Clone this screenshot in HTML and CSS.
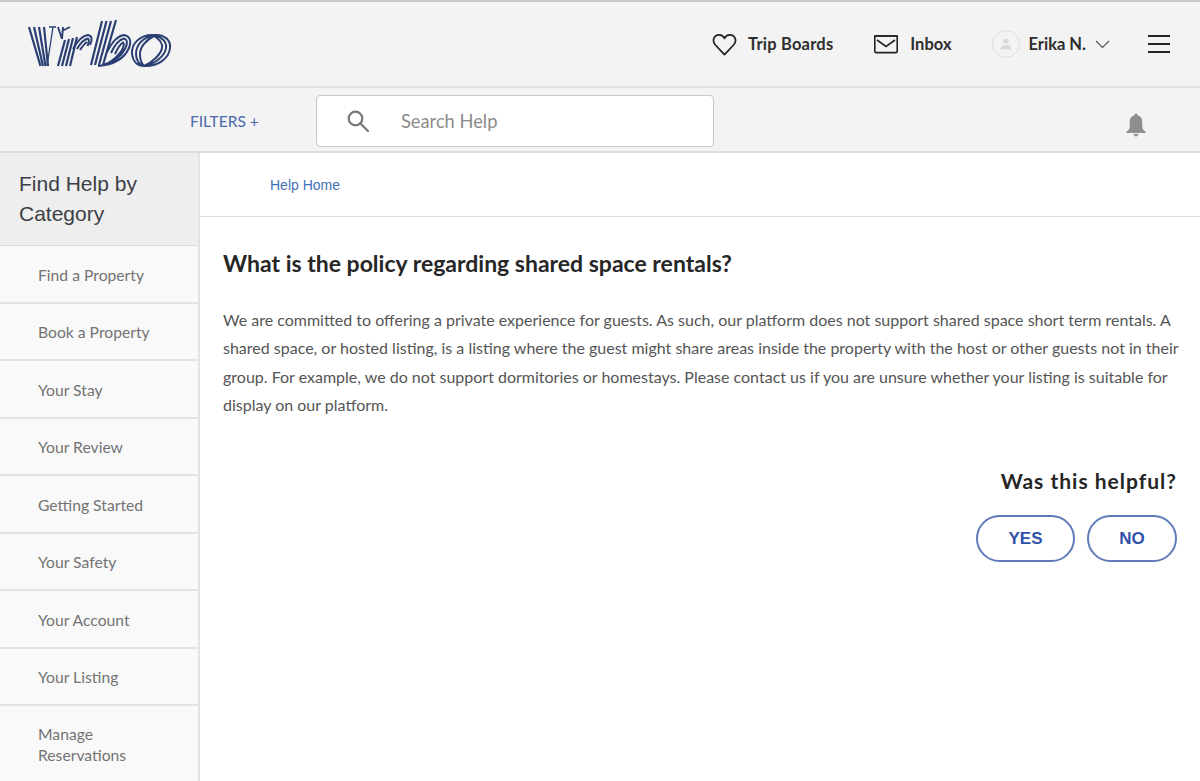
FILE: index.html
```html
<!DOCTYPE html>
<html lang="en">
<head>
    <meta charset="UTF-8">
    <title>Vrbo Help</title>
    <link rel="stylesheet" href="styles.css">
</head>
<body>
    <div class="top-strip"></div>

    <!-- Main header -->
    <header class="site-header">
        <a class="logo" href="#" aria-label="Vrbo">
            <svg width="144" height="50" viewBox="0 0 144 50" fill="none" stroke="#2b3f73" stroke-width="2.200">
                <!-- V -->
                <path d="M1 9 L12.500 48 M6 9 L15 48 M11 9 L17.500 48 M16 9 L20 48"/>
                <path d="M19 48 L25 9 M21 9 H28" stroke-width="1.300"/>
                <!-- r -->
                <path d="M30 9 L34 21 M35 9 L34 21 M34 13 L42 9" stroke-width="1.900"/>
                <path d="M30 48 L37 22 M34 48 L41 21 M38 48 L45 20 M42 48 L49 19"/>
                <path d="M45 31 Q52 18 60 17 Q66 18 62 27 M49 31 Q54 22 60 20.500 Q62 22 59.500 28 M52 32 Q56 26 59 24" stroke-width="2"/>
                <!-- b -->
                <path d="M63 47 L74 3 M67 47 L78.500 3 M71 47 L83 3 M75 47 L88 2"/>
                <path d="M79 34 Q87 18 96 17 Q105 19 101 30 Q94 46 70 48 M83 35 Q89 22 96 20.500 Q101 22 97.500 30 Q91 43 75 47 M87 36 Q91 27 95 24.500 Q97 26 94 32 Q89 40 80 45" stroke-width="2"/>
                <!-- o -->
                <path d="M126 17 C112 16 103 26 104 36 C105 44 110 48 116 48 M126 17.500 C115 19 108 27 108 36 C108 43 112 47 116 48 M126 18 C118 22 112 29 112 36 C112 42 114 46 116 48" stroke-width="2"/>
                <path d="M126 17 C136 16 143 22 142 30 C141 40 130 49 116 48 M126 17.500 C134 19 139 24 138 30 C137 38 127 46 116 48 M126 18 C131 21 135 25 134 30 C133 36 125 44 116 48" stroke-width="2"/>
            </svg>
        </a>
        <nav class="user-nav">
            <a class="nav-link" href="#">
                <svg width="25" height="23" viewBox="0 0 26 24" fill="none" stroke="#222" stroke-width="1.800" stroke-linejoin="round">
                    <path d="M13 22.500 L3.500 12.500 C-0.500 8 2 2 7.500 2 C10 2 12 3.500 13 5.500 C14 3.500 16 2 18.500 2 C24 2 26.500 8 22.500 12.500 Z"/>
                </svg>
                Trip Boards
            </a>
            <a class="nav-link inbox" href="#">
                <svg width="24" height="19" viewBox="0 0 24 19" fill="none" stroke="#222" stroke-width="1.600">
                    <path d="M0 1 H24"/>
                    <rect x="0.800" y="1" width="22.400" height="16.600" rx="1"/>
                    <path d="M3 5 L12 11.500 L21 5"/>
                </svg>
                Inbox
            </a>
            <a class="nav-link user" href="#">
                <span class="avatar">
                    <svg width="12" height="12" viewBox="0 0 12 12" fill="#d9d9d9">
                        <circle cx="6" cy="3.200" r="2.600"/>
                        <path d="M0.500 11.500 C0.500 8 3 7 6 7 C9 7 11.500 8 11.500 11.500 Z"/>
                    </svg>
                </span>
                Erika N.
                <svg width="15" height="9" viewBox="0 0 15 9" fill="none" stroke="#555" stroke-width="1.200">
                    <path d="M1 1 L7.500 7.500 L14 1"/>
                </svg>
            </a>
            <button class="menu-btn" aria-label="Menu"><span></span><span></span><span></span></button>
        </nav>
    </header>

    <!-- Search bar -->
    <div class="search-bar">
        <a class="filters" href="#">FILTERS +</a>
        <div class="search-box">
            <svg width="22" height="22" viewBox="0 0 22 22" fill="none" stroke="#777" stroke-width="2.200">
                <circle cx="8.500" cy="8.500" r="6.800"/>
                <path d="M13.500 13.500 L21 21" stroke-linecap="round"/>
            </svg>
            <span class="search-text">Search Help</span>
        </div>
        <svg class="bell" width="20" height="24" viewBox="0 0 20 24" fill="#8e8e8e">
            <path d="M10 0.500 C11 0.500 11.500 1.200 11.500 2.300 C15 3.300 16.300 6 16.300 9.500 V14 C16.300 16 17.800 17.500 19.500 18.800 V20 H0.500 V18.800 C2.200 17.500 3.700 16 3.700 14 V9.500 C3.700 6 5 3.300 8.500 2.300 C8.500 1.200 9 0.500 10 0.500 Z"/>
            <path d="M7.500 21 H12.500 C12.300 22.600 11.300 23.500 10 23.500 C8.700 23.500 7.700 22.600 7.500 21 Z"/>
        </svg>
    </div>

    <div class="layout">
        <!-- Sidebar categories -->
        <aside class="sidebar">
            <h2 class="sidebar-title">Find Help by Category</h2>
            <a class="cat" href="#">Find a Property</a>
            <a class="cat" href="#">Book a Property</a>
            <a class="cat" href="#">Your Stay</a>
            <a class="cat" href="#">Your Review</a>
            <a class="cat" href="#">Getting Started</a>
            <a class="cat" href="#">Your Safety</a>
            <a class="cat" href="#">Your Account</a>
            <a class="cat" href="#">Your Listing</a>
            <a class="cat cat-tall" href="#">Manage<br>Reservations</a>
        </aside>

        <main class="content">
            <div class="crumbs"><a href="#">Help Home</a></div>
            <article class="article">
                <h1>What is the policy regarding shared space rentals?</h1>
                <p>We are committed to offering a private experience for guests. As such, our platform does not support shared space short term rentals. A shared space, or hosted listing, is a listing where the guest might share areas inside the property with the host or other guests not in their group. For example, we do not support dormitories or homestays. Please contact us if you are unsure whether your listing is suitable for display on our platform.</p>
                <div class="feedback">
                    <div class="feedback-title">Was this helpful?</div>
                    <div class="feedback-btns">
                        <button class="pill pill-yes">YES</button>
                        <button class="pill pill-no">NO</button>
                    </div>
                </div>
            </article>
        </main>
    </div>
</body>
</html>
```

FILE: styles.css
```css
/* Page */
html, body {
    height: 781px;
    overflow: hidden;
}

body {
    margin: 0;
    font-family: Lato, "Open Sans", sans-serif;
    color: #222;
    background: #fff;
}

a {
    text-decoration: none;
}

.top-strip {
    height: 2px;
    background: #c9c9c9;
}

/* Header */
.site-header {
    height: 86px;
    box-sizing: border-box;
    display: flex;
    align-items: center;
    justify-content: space-between;
    padding: 0 30px 0 28px;
    background: #f3f3f3;
    border-bottom: 2px solid #e2e2e2;
}

.logo {
    display: flex;
    margin-bottom: 2px;
}

.user-nav {
    display: flex;
    align-items: center;
}

.nav-link {
    display: flex;
    align-items: center;
    gap: 11px;
    margin-right: 41px;
    font-size: 16.500px;
    font-weight: 700;
    letter-spacing: 0.200px;
    color: #2e2e2e;
}

.nav-link.inbox {
    gap: 12px;
    margin-right: 40px;
    letter-spacing: 0;
}

.nav-link.user {
    margin-right: 38px;
    gap: 9px;
    letter-spacing: 0;
}

.avatar {
    display: flex;
    align-items: center;
    justify-content: center;
    width: 26px;
    height: 26px;
    border: 1px solid #ddd;
    border-radius: 50%;
}

.menu-btn {
    display: flex;
    flex-direction: column;
    gap: 6px;
    padding: 0;
    border: none;
    background: none;
}

.menu-btn span {
    display: block;
    width: 22px;
    height: 2px;
    background: #222;
}

/* Search bar */
.search-bar {
    height: 65px;
    box-sizing: border-box;
    display: flex;
    align-items: center;
    padding: 3px 54px 0 190px;
    background: #f3f3f3;
    border-bottom: 2px solid #dcdcdc;
}

.filters {
    width: 126px;
    font-size: 15.500px;
    color: #4a68ad;
}

.search-box {
    width: 398px;
    height: 52px;
    box-sizing: border-box;
    display: flex;
    align-items: center;
    gap: 32px;
    padding-left: 30px;
    background: #fff;
    border: 1px solid #c8c8c8;
    border-radius: 4px;
}

.search-text {
    font-size: 18.300px;
    color: #8b8b8b;
}

.bell {
    margin-left: auto;
    margin-top: 8px;
}

/* Columns */
.layout {
    display: flex;
    height: 628px;
}

.sidebar {
    width: 200px;
    flex-shrink: 0;
    box-sizing: border-box;
    background: #f9f9f9;
    border-right: 2px solid #e3e3e3;
}

.sidebar-title {
    height: 93px;
    box-sizing: border-box;
    margin: 0;
    padding: 16px 30px 0 19px;
    font-family: "Liberation Sans", Arial, sans-serif;
    font-size: 21px;
    font-weight: 400;
    line-height: 30px;
    color: #3c3f44;
    background: #eeeeee;
    border-bottom: 1px solid #dedede;
}

.cat {
    display: flex;
    align-items: center;
    height: 57.500px;
    box-sizing: border-box;
    padding: 2px 0 0 38px;
    font-size: 15.700px;
    color: #737373;
    border-bottom: 2px solid #e3e3e3;
}

.cat-tall {
    height: 76px;
    line-height: 21px;
    border-bottom: none;
}

/* Article */
.content {
    flex: 1;
    min-width: 0;
}

.crumbs {
    height: 64px;
    box-sizing: border-box;
    padding: 24px 0 0 70px;
    font-family: "Liberation Sans", Arial, sans-serif;
    font-size: 14px;
    border-bottom: 1px solid #dcdcdc;
}

.crumbs a {
    color: #4470b8;
}

.article {
    padding: 31px 23px 0 23px;
}

.article h1 {
    margin: 0;
    font-size: 23px;
    font-weight: 700;
    line-height: 30px;
    color: #262626;
}

.article p {
    margin: 28px -12px 0 0;
    font-size: 16px;
    line-height: 28.400px;
    color: #555555;
}

.feedback {
    margin-top: 48px;
    display: flex;
    flex-direction: column;
    align-items: flex-end;
}

.feedback-title {
    font-size: 21px;
    font-weight: 700;
    letter-spacing: 1px;
    color: #262626;
}

.feedback-btns {
    display: flex;
    gap: 12px;
    margin-top: 22px;
}

.pill {
    height: 47px;
    padding-top: 2px;
    font-family: "Liberation Sans", Arial, sans-serif;
    font-size: 17px;
    font-weight: 700;
    color: #2f51a8;
    background: #fff;
    border: 2px solid #5f7ab8;
    border-radius: 24px;
}

.pill-yes {
    width: 99px;
}

.pill-no {
    width: 90px;
}
```
